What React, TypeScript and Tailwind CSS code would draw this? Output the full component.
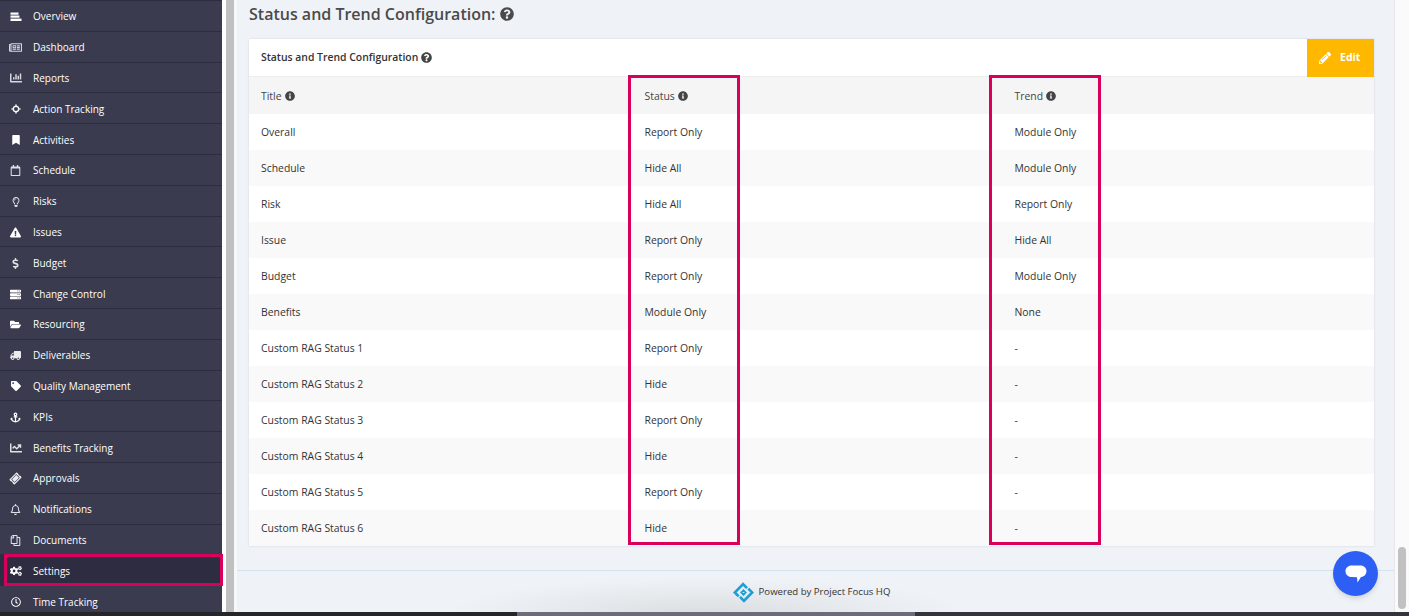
import type { IconType } from "react-icons";
import {
  FaAnchor,
  FaBookmark,
  FaChartBar,
  FaChartLine,
  FaCogs,
  FaDollarSign,
  FaExclamationTriangle,
  FaFolderOpen,
  FaInfoCircle,
  FaPencilAlt,
  FaQuestionCircle,
  FaRegBell,
  FaRegCalendar,
  FaRegClock,
  FaRegCopy,
  FaRegLightbulb,
  FaRegNewspaper,
  FaServer,
  FaTag,
  FaTicketAlt,
  FaTruck,
} from "react-icons/fa";

function OverviewIcon({ className }: { className?: string }) {
  return (
    <svg viewBox="0 0 12 12" fill="currentColor" className={className}>
      <rect x="0.5" y="1.5" width="8" height="2.2" />
      <rect x="0.5" y="4.5" width="9" height="2.2" />
      <rect x="0.5" y="7.6" width="11" height="2.4" />
    </svg>
  );
}

function ActionIcon({ className }: { className?: string }) {
  return (
    <svg viewBox="0 0 12 12" fill="currentColor" className={className}>
      <circle cx="6" cy="6" r="3.2" fill="none" stroke="currentColor" strokeWidth="1.5" />
      <path d="M6 0 L7.6 2 H4.4 Z M6 12 L7.6 10 H4.4 Z M0 6 L2 4.4 V7.6 Z M12 6 L10 4.4 V7.6 Z" />
    </svg>
  );
}

const navItems: { label: string; icon: IconType | typeof OverviewIcon; iconClass: string }[] = [
  { label: "Overview", icon: OverviewIcon, iconClass: "h-[12px] w-[12px]" },
  { label: "Dashboard", icon: FaRegNewspaper, iconClass: "h-[13px] w-[13px] opacity-80" },
  { label: "Reports", icon: FaChartBar, iconClass: "h-[12px] w-[12px] opacity-80" },
  { label: "Action Tracking", icon: ActionIcon, iconClass: "h-[10px] w-[10px]" },
  { label: "Activities", icon: FaBookmark, iconClass: "h-[10px] w-[10px]" },
  { label: "Schedule", icon: FaRegCalendar, iconClass: "h-[11px] w-[11px] opacity-85" },
  { label: "Risks", icon: FaRegLightbulb, iconClass: "h-[10px] w-[10px] opacity-85" },
  { label: "Issues", icon: FaExclamationTriangle, iconClass: "h-[11px] w-[11px]" },
  { label: "Budget", icon: FaDollarSign, iconClass: "h-[11px] w-[11px] opacity-85" },
  { label: "Change Control", icon: FaServer, iconClass: "h-[11px] w-[11px]" },
  { label: "Resourcing", icon: FaFolderOpen, iconClass: "h-[11px] w-[11px]" },
  { label: "Deliverables", icon: FaTruck, iconClass: "h-[11px] w-[11px] -scale-x-100 opacity-90" },
  { label: "Quality Management", icon: FaTag, iconClass: "h-[10px] w-[10px]" },
  { label: "KPIs", icon: FaAnchor, iconClass: "h-[11px] w-[11px]" },
  { label: "Benefits Tracking", icon: FaChartLine, iconClass: "h-[12px] w-[12px] opacity-85" },
  { label: "Approvals", icon: FaTicketAlt, iconClass: "h-[11px] w-[11px] -rotate-45 opacity-90" },
  { label: "Notifications", icon: FaRegBell, iconClass: "h-[11px] w-[11px] opacity-85" },
  { label: "Documents", icon: FaRegCopy, iconClass: "h-[11px] w-[11px] -scale-x-100 opacity-85" },
  { label: "Settings", icon: FaCogs, iconClass: "h-[12px] w-[12px]" },
  { label: "Time Tracking", icon: FaRegClock, iconClass: "h-[10px] w-[10px]" },
];

const rows = [
  ["Overall", "Report Only", "Module Only"],
  ["Schedule", "Hide All", "Module Only"],
  ["Risk", "Hide All", "Report Only"],
  ["Issue", "Report Only", "Hide All"],
  ["Budget", "Report Only", "Module Only"],
  ["Benefits", "Module Only", "None"],
  ["Custom RAG Status 1", "Report Only", "-"],
  ["Custom RAG Status 2", "Hide", "-"],
  ["Custom RAG Status 3", "Report Only", "-"],
  ["Custom RAG Status 4", "Hide", "-"],
  ["Custom RAG Status 5", "Report Only", "-"],
  ["Custom RAG Status 6", "Hide", "-"],
];

function Sidebar() {
  return (
    <aside className="w-[222px] shrink-0 bg-[#3a3b4f]">
      {navItems.map((item) => {
        const Icon = item.icon;
        const active = item.label === "Settings";
        return (
          <div
            key={item.label}
            className={`flex h-[30.8px] items-center border-t border-[#2c2d3e] pt-[2px] text-[10px] text-white ${
              active ? "bg-[#2d2c40]" : ""
            }`}
          >
            <span className="flex w-[31px] shrink-0 justify-center">
              <Icon className={item.iconClass} />
            </span>
            <span className="pl-[2px]">{item.label}</span>
          </div>
        );
      })}
    </aside>
  );
}

function Logo() {
  return (
    <svg viewBox="0 0 24 24" className="h-[21px] w-[21px]" fill="none" stroke="#1b9fd8" strokeWidth="3">
      <path d="M6.5 16.5 L2 12 L11.5 2.5 L16 7" />
      <path d="M17.5 7.5 L22 12 L12.5 21.5 L8 17" />
      <path d="M12 9.5 L14.5 12 L12 14.5 L9.5 12 Z" strokeWidth="2" />
    </svg>
  );
}

export default function App() {
  return (
    <div className="relative flex h-[616px] w-[1409px] flex-col overflow-hidden font-['Open_Sans',sans-serif] text-[#333]">
      <div className="flex h-[612px] bg-white">
        <Sidebar />
        <div className="ml-[4px] w-[8px] shrink-0 bg-[#c0c0c0]" />
        <div className="w-[3px] shrink-0 bg-[#f6f8fa]" />
        <main className="flex min-w-0 flex-1 flex-col bg-[#eff3f8]">
          <div className="flex h-[39px] items-center gap-[4px] px-[12px] pb-[12px] text-[16px] font-semibold text-[#4a4a4a]">
            Status and Trend Configuration:
            <FaQuestionCircle className="h-[14px] w-[14px]" />
          </div>

          <section className="mx-[12px] w-[1125px] bg-white shadow-[0_0_2px_rgba(0,0,0,0.12)]">
            <div className="flex h-[38px] items-center justify-between border-b border-[#eeeeee]">
              <div className="flex items-center gap-[3px] pl-[12px] text-[10.4px] font-semibold text-[#333]">
                Status and Trend Configuration
                <FaQuestionCircle className="h-[11px] w-[11px] text-[#444]" />
              </div>
              <button className="flex h-[38px] w-[67px] items-center gap-[9px] bg-[#ffb800] pl-[12px] text-[10.5px] font-bold text-white">
                <FaPencilAlt className="h-[12px] w-[12px]" />
                Edit
              </button>
            </div>

            <div className="grid h-[37px] grid-cols-[384px_370px_371px] items-center bg-[#f5f5f5] pt-[2px] text-[10.4px] text-[#444]">
              {["Title", "Status", "Trend"].map((h, i) => (
                <div key={h} className={`flex items-center gap-[3px] ${i === 0 ? "pl-[12px]" : "pl-[11.5px]"}`}>
                  {h}
                  <FaInfoCircle className="h-[10px] w-[10px] text-[#444]" />
                </div>
              ))}
            </div>

            {rows.map((row, i) => (
              <div
                key={row[0]}
                className={`grid h-[36px] grid-cols-[384px_370px_371px] items-center pt-[2px] text-[10.4px] text-[#333] ${
                  i % 2 === 1 ? "bg-[#f9f9f9]" : "bg-white"
                }`}
              >
                {row.map((cell, j) => (
                  <div key={j} className={j === 0 ? "pl-[12px]" : "pl-[11.5px]"}>
                    {cell}
                  </div>
                ))}
              </div>
            ))}
          </section>

          <footer className="mt-[24px] flex h-[42px] items-center justify-center gap-[5px] border-t border-[#d5e1ee] bg-[radial-gradient(ellipse_260px_34px_at_470px_100%,#dcdfe1,transparent)] pr-[8px] pt-[2px] text-[9.6px] text-[#333]">
            <Logo />
            Powered by Project Focus HQ
          </footer>
        </main>

        <div className="relative w-[15px] shrink-0 border-l border-[#e8e8e8] bg-[#fafafa]">
          <div className="absolute left-[3px] top-[547px] h-[62px] w-[8px] rounded-full bg-[#c1c1c1]" />
        </div>
      </div>

      {/* desktop showing below the window */}
      <div className="flex h-[4px]">
        <div className="w-[517px] bg-[#26262a]" />
        <div className="w-[398px] bg-[#6d6a7a]" />
        <div className="flex-1 bg-[#33343c]" />
      </div>

      {/* highlight boxes drawn over the screenshot */}
      <div className="absolute left-[4px] top-[554px] h-[32px] w-[219px] border-[3px] border-[#d9005b]" />
      <div className="absolute left-[628px] top-[75px] h-[470px] w-[112px] border-[3px] border-[#d9005b]" />
      <div className="absolute left-[989px] top-[75px] h-[470px] w-[112px] border-[3px] border-[#d9005b]" />

      {/* chat bubble */}
      <div className="absolute left-[1333px] top-[551px] flex h-[45px] w-[45px] items-center justify-center rounded-full bg-[#2e5ff5] shadow-md">
        <svg viewBox="0 0 24 24" className="h-[24px] w-[24px]" fill="white">
          <path d="M7.5 3.5 H16.5 C20 3.5 22.5 6 22.5 9 C22.5 12.5 20 14.5 17.5 15 L17 15 L13.5 20.5 L13 15.3 L7.5 15 C4 15 1.5 12.5 1.5 9 C1.5 6 4 3.5 7.5 3.5 Z" />
        </svg>
      </div>
    </div>
  );
}
